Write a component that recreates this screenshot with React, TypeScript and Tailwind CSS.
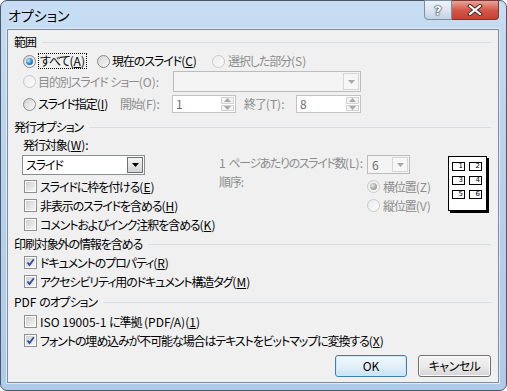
import clsx from "clsx";

type BoolProps = { checked?: boolean; disabled?: boolean };

const Radio = ({ checked, disabled }: BoolProps) => (
  <span
    className={clsx(
      "flex h-[13px] w-[13px] shrink-0 items-center justify-center rounded-full border",
      disabled
        ? "border-[#c9c9c9] bg-gradient-to-br from-[#ececec] to-[#fbfbfb]"
        : "border-[#8a8a8a] bg-gradient-to-br from-[#d2d2d2] to-[#fbfbfb]"
    )}
  >
    {checked && (
      <span
        className={clsx(
          "h-[7px] w-[7px] rounded-full",
          disabled
            ? "bg-[radial-gradient(circle_at_35%_35%,#e6e6e6,#a4a4a4_60%,#8c8c8c)]"
            : "bg-[radial-gradient(circle_at_35%_35%,#b5ecff,#2a84cc_55%,#0f4e8e)]"
        )}
      />
    )}
  </span>
);

const Check = ({ checked }: BoolProps) => (
  <span className="flex h-[13px] w-[13px] shrink-0 items-center justify-center border border-[#8e8f8f] bg-white">
    <span className="relative flex h-[9px] w-[9px] items-center justify-center bg-gradient-to-br from-[#cfcfcf] to-[#f6f6f6]">
      {checked && (
        <svg width="9" height="9" viewBox="0 0 9 9" className="absolute">
          <path d="M1.5 4.5 L3.5 7 L7.8 1.2" fill="none" stroke="#2a4aa0" strokeWidth="1.8" />
        </svg>
      )}
    </span>
  </span>
);

const Section = ({ children }: { children: React.ReactNode }) => (
  <div className="flex h-[14px] items-center gap-[6px]">
    <span className="leading-[14px]">{children}</span>
    <span className="h-px flex-1 bg-[#d5dfe5]" />
  </div>
);

const Arrow = ({ color, up }: { color: string; up?: boolean }) => (
  <svg width="7" height="4" viewBox="0 0 7 4">
    <path d={up ? "M0 4 L3.5 0 L7 4 Z" : "M0 0 L7 0 L3.5 4 Z"} fill={color} />
  </svg>
);

const Spin = ({ value, w }: { value: string; w: string }) => (
  <div className={clsx("flex h-[18px] border border-[#c2c2c2] bg-white", w)}>
    <span className="flex-1 pl-[3px] leading-[16px] text-[#6d6d6d]">{value}</span>
    <div className="flex w-[15px] flex-col gap-px p-px">
      <div className="flex flex-1 items-center justify-center border border-[#d3d3d3] bg-[#f3f3f3]">
        <Arrow color="#a8a8a8" up />
      </div>
      <div className="flex flex-1 items-center justify-center border border-[#d3d3d3] bg-[#f3f3f3]">
        <Arrow color="#a8a8a8" />
      </div>
    </div>
  </div>
);

const DisabledCombo = ({ value, w, h }: { value?: string; w: string; h: string }) => (
  <div className={clsx("flex border border-[#bcbcbc] bg-[#f4f4f4] p-px", w, h)}>
    <span className="flex-1 pl-[3px] leading-[15px] text-[#6d6d6d]">{value}</span>
    <div className="flex w-[16px] items-center justify-center border border-[#d6d6d6] bg-[#f6f6f6]">
      <Arrow color="#a9a9a9" />
    </div>
  </div>
);

// access key in parentheses, latin text keeps normal spacing
const Key = ({ k, plain }: { k: string; plain?: boolean }) => (
  <span className="tracking-normal">
    ({plain ? k : <u className="underline-offset-1">{k}</u>})
  </span>
);

const L = ({ children }: { children: React.ReactNode }) => (
  <span className="tracking-normal">{children}</span>
);

const CheckRow = ({ checked, children }: { checked?: boolean; children: React.ReactNode }) => (
  <div className="flex h-[19px] items-center gap-[3px]">
    <Check checked={checked} />
    <span className="leading-[14px]">{children}</span>
  </div>
);

const Cell = ({ n }: { n: number }) => (
  <span className="flex h-[9px] w-[13px] items-center justify-end border border-black pr-px font-['DejaVu_Sans',sans-serif] text-[7px] leading-none tracking-normal">
    {n}
  </span>
);

export default function App() {
  const gray = "text-[#8d8d8d]";
  return (
    <div className="h-[391px] w-[507px] whitespace-nowrap bg-white font-['Noto_Sans_CJK_JP',sans-serif] text-[12px] tracking-[-1.1px] text-black [font-feature-settings:'palt']">
      <div className="flex h-full w-full flex-col rounded-[7px] border border-[#4b5968] bg-gradient-to-b from-[#c6ddf3] via-[#b6d1ec] to-[#aecbe9] pb-[7px] pl-[6px] pr-[7px]">
        {/* title bar */}
        <div className="flex h-[28px] justify-between">
          <span className="pl-[1px] pt-[5px] text-[14px] leading-[18px] tracking-normal [text-shadow:0_0_6px_#eaf3fc]">
            オプション
          </span>
          <div className="-mt-px flex h-[20px]">
            <div className="flex w-[28px] items-center justify-center rounded-bl-[4px] border border-[#7d8fa4] bg-gradient-to-b from-[#eef3f9] via-[#dbe5f0] to-[#c2d3e5] font-['DejaVu_Sans',sans-serif] text-[13px] font-bold leading-none tracking-normal text-white [text-shadow:0_0_1px_#2a3440,0_0_1px_#2a3440,0_0_2px_#2a3440]">
              ?
            </div>
            <div className="flex w-[47px] items-center justify-center rounded-br-[4px] border border-l-0 border-[#7a3a33] bg-gradient-to-b from-[#e8a597] via-[#d4574a] to-[#c5412f]">
              <svg width="16" height="12" viewBox="0 0 16 12">
                <path d="M3 2 L13 10 M13 2 L3 10" stroke="#3b2420" strokeWidth="4" strokeLinecap="square" />
                <path d="M3 2 L13 10 M13 2 L3 10" stroke="#ffffff" strokeWidth="2.2" strokeLinecap="square" />
              </svg>
            </div>
          </div>
        </div>

        {/* client area */}
        <div className="flex flex-1 flex-col border border-[#7d8d9e] bg-[#f0f0f0] pl-[6px] pr-[7px] pt-[5px] shadow-[0_0_0_1px_#dfeaf6]">
          <Section>範囲</Section>
          <div className="mt-[3px] flex h-[18px] items-center pl-[9px]">
            <Radio checked />
            <span className="ml-[2px] w-[49px] border border-dotted border-black pl-px leading-[14px]">
              すべて<Key k="A" />
            </span>
            <span className="ml-[10px]">
              <Radio />
            </span>
            <span className="ml-[2px] w-[100px] leading-[14px]">
              現在のスライド<Key k="C" />
            </span>
            <Radio disabled />
            <span className={clsx("ml-[3px] leading-[14px]", gray)}>
              選択した部分<Key k="S" plain />
            </span>
          </div>
          <div className="mt-px flex h-[21px] items-center pl-[9px]">
            <Radio disabled />
            <span className={clsx("ml-[2px] w-[135px] leading-[14px]", gray)}>
              目的別スライド<L> </L>ショー<Key k="O" plain />:
            </span>
            <DisabledCombo w="w-[188px]" h="h-[21px]" />
          </div>
          <div className="mt-[3px] flex h-[18px] items-center pl-[9px]">
            <Radio />
            <span className="ml-[2px] w-[82px] leading-[14px]">
              スライド指定<Key k="I" />
            </span>
            <span className={clsx("w-[52px] leading-[14px]", gray)}>
              開始<Key k="F" plain />:
            </span>
            <Spin value="1" w="w-[64px]" />
            <span className={clsx("ml-[8px] w-[52px] leading-[14px]", gray)}>
              終了<Key k="T" plain />:
            </span>
            <Spin value="8" w="w-[65px]" />
          </div>

          <div className="mt-[7px]">
            <Section>発行オプション</Section>
          </div>
          <div className="mt-[4px] h-[14px] pl-[9px] leading-[14px]">
            発行対象<Key k="W" />:
          </div>
          <div className="mt-[3px] flex">
            <div className="flex w-[205px] flex-col pl-[8px]">
              <div className="flex h-[20px] w-[123px] border border-[#8a8e96] bg-white p-px">
                <span className="flex-1 pl-[2px] leading-[16px]">スライド</span>
                <div className="flex w-[16px] items-center justify-center border border-[#707070] bg-gradient-to-b from-[#f4f4f4] to-[#d4d4d4]">
                  <Arrow color="#000000" />
                </div>
              </div>
              <div className="mt-[2px] flex flex-col pl-[2px]">
                <CheckRow>
                  スライドに枠を付ける<Key k="E" />
                </CheckRow>
                <CheckRow>
                  非表示のスライドを含める<Key k="H" />
                </CheckRow>
                <CheckRow>
                  コメントおよびインク注釈を含める<Key k="K" />
                </CheckRow>
              </div>
            </div>
            <div className="flex w-[229px] flex-col">
              <div className="flex h-[20px] items-start">
                <span className={clsx("w-[148px] pt-px leading-[14px] tracking-[-1.4px]", gray)}>
                  <L>1 </L>ページあたりのスライド数<Key k="L" plain />:
                </span>
                <DisabledCombo value="6" w="w-[43px]" h="h-[19px]" />
              </div>
              <div className="flex">
                <span className={clsx("w-[148px] leading-[14px]", gray)}>順序:</span>
                <div className="mt-[2px] flex flex-col">
                  <div className="flex h-[19px] items-center gap-[3px]">
                    <Radio checked disabled />
                    <span className={clsx("leading-[14px]", gray)}>
                      横位置<Key k="Z" plain />
                    </span>
                  </div>
                  <div className="flex h-[19px] items-center gap-[3px]">
                    <Radio disabled />
                    <span className={clsx("leading-[14px]", gray)}>
                      縦位置<Key k="V" plain />
                    </span>
                  </div>
                </div>
              </div>
            </div>
            <div className="mt-px">
              <div className="grid h-[55px] w-[39px] grid-cols-2 content-start gap-x-[3px] gap-y-[5px] border border-black bg-white px-[3px] pt-[5px] shadow-[2px_2px_0_#000]">
                <Cell n={1} />
                <Cell n={2} />
                <Cell n={3} />
                <Cell n={4} />
                <Cell n={5} />
                <Cell n={6} />
              </div>
            </div>
          </div>

          <div className="mt-[3px]">
            <Section>印刷対象外の情報を含める</Section>
          </div>
          <div className="mt-[2px] flex flex-col pl-[10px]">
            <CheckRow checked>
              ドキュメントのプロパティ<Key k="R" />
            </CheckRow>
            <CheckRow checked>
              アクセシビリティ用のドキュメント構造タグ<Key k="M" />
            </CheckRow>
          </div>

          <div className="mt-[4px]">
            <Section>
              <L>PDF </L>のオプション
            </Section>
          </div>
          <div className="mt-[3px] flex flex-col pl-[10px]">
            <CheckRow>
              <L>ISO 19005-1 </L>に準拠<L> (PDF/A)</L>
              <Key k="1" />
            </CheckRow>
            <CheckRow checked>
              フォントの埋め込みが不可能な場合はテキストをビットマップに変換する<Key k="X" />
            </CheckRow>
          </div>

          <div className="mt-[5px] flex justify-end gap-[11px]">
            <button className="h-[22px] w-[72px] rounded-[3px] border border-[#3c7fb1] bg-gradient-to-b from-[#f2f8fc] via-[#e3f0f9] to-[#c7e2f4] leading-[18px] tracking-normal shadow-[inset_0_0_0_1px_#cbe9fa]">
              OK
            </button>
            <button className="h-[22px] w-[73px] rounded-[3px] border border-[#707070] bg-gradient-to-b from-[#f2f2f2] via-[#ebebeb] to-[#d4d4d4] leading-[18px] tracking-[-0.5px] shadow-[inset_0_0_0_1px_#fbfbfb]">
              キャンセル
            </button>
          </div>
        </div>
      </div>
    </div>
  );
}
